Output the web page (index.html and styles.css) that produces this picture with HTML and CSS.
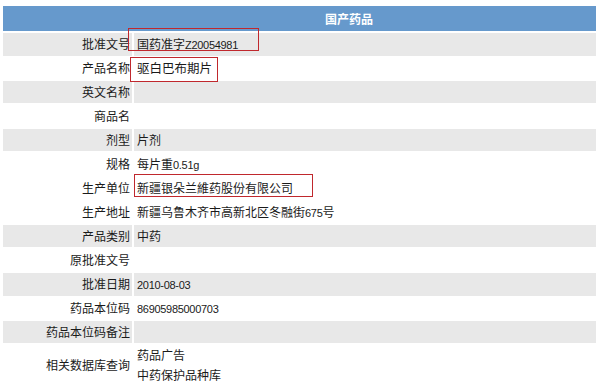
FILE: index.html
```html
<!DOCTYPE html>
<html lang="zh">
<head>
<meta charset="utf-8">
<link rel="stylesheet" href="styles.css">
</head>
<body>
<div class="tbl">
  <div class="head">国产药品</div>
  <div class="row alt"><div class="lab">批准文号</div><div class="val">国药准字<span class="n">Z20054981</span><span class="mark m1"></span></div></div>
  <div class="row"><div class="lab">产品名称</div><div class="val"><span class="big">驱白巴布期片</span><span class="mark m2"></span></div></div>
  <div class="row alt"><div class="lab">英文名称</div><div class="val"></div></div>
  <div class="row"><div class="lab">商品名</div><div class="val"></div></div>
  <div class="row alt"><div class="lab">剂型</div><div class="val">片剂</div></div>
  <div class="row"><div class="lab">规格</div><div class="val">每片重<span class="n">0.51g</span></div></div>
  <div class="row"><div class="lab">生产单位</div><div class="val">新疆银朵兰維药股份有限公司<span class="mark m3"></span></div></div>
  <div class="row"><div class="lab">生产地址</div><div class="val">新疆乌鲁木齐市高新北区冬融街<span class="n">675</span>号</div></div>
  <div class="row alt"><div class="lab">产品类别</div><div class="val">中药</div></div>
  <div class="row"><div class="lab">原批准文号</div><div class="val"></div></div>
  <div class="row alt"><div class="lab">批准日期</div><div class="val"><span class="n">2010-08-03</span></div></div>
  <div class="row"><div class="lab">药品本位码</div><div class="val"><span class="n">86905985000703</span></div></div>
  <div class="row alt"><div class="lab">药品本位码备注</div><div class="val"></div></div>
  <div class="row tall"><div class="lab">相关数据库查询</div><div class="val multi"><div>药品广告</div><div>中药保护品种库</div></div></div>
</div>
</body>
</html>
```
FILE: styles.css
```css
html, body {
  margin: 0;
  padding: 0;
  background: #fff;
  overflow: hidden;
}
body {
  font-family: "Noto Sans CJK SC", "Liberation Sans", sans-serif;
  font-size: 12px;
  color: #1a1a1a;
}
.tbl {
  margin: 6px 0 0 3px;
  width: 593px;
  display: flex;
  flex-direction: column;
  gap: 2px;
}
.head {
  height: 25px;
  line-height: 25px;
  background: #6699cc;
  color: #fff;
  font-weight: bold;
  padding-left: 322px;
}
.row {
  display: grid;
  grid-template-columns: 129px 462px;
  column-gap: 2px;
  height: 22px;
}
.lab, .val {
  line-height: 22px;
  white-space: nowrap;
}
.lab {
  text-align: right;
  padding-right: 2px;
}
.val {
  padding-left: 3px;
  position: relative;
}
.alt .lab, .alt .val {
  background: #e8e8e8;
}
.big {
  font-size: 12.5px;
}
.n {
  font-family: "Liberation Sans", sans-serif;
  font-size: 11px;
  letter-spacing: -0.3px;
}
.tall {
  height: 40px;
}
.tall .lab {
  line-height: 40px;
}
.multi {
  line-height: 20px;
}
.mark {
  position: absolute;
  z-index: 2;
  border: 1px solid #c0282d;
  box-sizing: border-box;
}
.m1 { left: -6px; top: -5px; width: 131px; height: 23px; }
.m2 { left: -4px; top: 0; width: 88px; height: 25px; }
.m3 { left: 0; top: -3px; width: 179px; height: 23px; }
```
